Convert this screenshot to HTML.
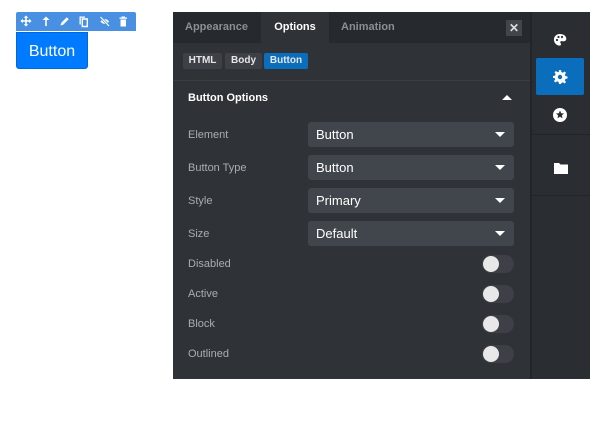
<!DOCTYPE html>
<html><head><style>
*{box-sizing:border-box;margin:0;padding:0}
body{width:608px;height:425px;background:#fff;font-family:"Liberation Sans",sans-serif;position:relative;overflow:hidden}
.a{position:absolute}
.tb{left:16px;top:12px;width:120px;height:19px;background:#4a90e2;border-radius:2px 2px 0 0}
.btn{left:16px;top:32px;width:72px;height:37px;background:#007bff;border-radius:0 0 3px 3px;color:#fff;font-size:16px;line-height:37px;text-align:center;border:1px solid #0069d9}
.panel{left:173px;top:12px;width:357px;height:367px;background:#2f3337}
.tabs{left:0;top:0;width:357px;height:31px;background:#26292d}
.tab{top:0;height:31px;line-height:31px;font-size:11px;font-weight:bold;color:#8a8f95}
.crumb{top:41px;height:16px;line-height:16px;font-size:10px;font-weight:bold;color:#e6e6e6;background:#3d4147;border-radius:2px;text-align:center}
.lbl{left:15px;font-size:11px;color:#a9adb2}
.sel{left:135px;width:206px;height:25px;background:#41454c;border-radius:3px;color:#fff;font-size:13px;line-height:25px;padding-left:8px}
.sel:after{content:"";position:absolute;right:9px;top:10px;border-left:5px solid transparent;border-right:5px solid transparent;border-top:5px solid #fff}
.tg{left:309px;width:32px;height:18px;border-radius:9px;background:#3d4147}
.tg:before{content:"";position:absolute;left:1px;top:1px;width:16px;height:16px;border-radius:50%;background:#e8e8e8}
.side{left:530px;top:12px;width:60px;height:367px;background:#2a2e32;border-left:2px solid #212428}
</style></head><body>
<div class="a tb">
<svg width="120" height="19" viewBox="0 0 120 19" fill="#fff">
<path d="M10 3.5l2.3 2.3h-1.5v2.4h2.4V6.7l2.3 2.3-2.3 2.3V9.8h-2.4v2.4h1.5L10 14.5l-2.3-2.3h1.5V9.8H6.8v1.5L4.5 9l2.3-2.3v1.5h2.4V5.8H7.7z"/>
<path d="M30 4.5l3.5 3.5h-2.7v6h-1.6V8h-2.7z"/>
<path d="M44.5 13.5l.8-2.7 5.5-5.5 1.9 1.9-5.5 5.5z"/>
<path d="M63.5 4.5h5.5v1.3h-4.2V12.5h-1.3z"/><path d="M66.3 7h5v7.5h-5z" fill="none" stroke="#fff" stroke-width="1.4"/>
<path d="M84.5 9.5c2-3.2 6.5-3.2 8.5 0-2 3.2-6.5 3.2-8.5 0z"/><path d="M84.5 5l8.5 9" stroke="#4a90e2" stroke-width="2.5"/><path d="M84.5 5l8.5 9" stroke="#fff" stroke-width="1.2"/>
<path d="M105.5 4.5h3.5v1h2v1.3h-7.5V5.5h2zM104.5 7.5h5.5v7h-5.5z"/>
</svg></div>
<div class="a btn">Button</div>
<div class="a panel">
<div class="a tabs"></div>
<div class="a tab" style="left:12px">Appearance</div>
<div class="a tab" style="left:88px;width:68px;background:#2f3337;color:#fff;text-align:center">Options</div>
<div class="a tab" style="left:168px">Animation</div>
<div class="a" style="left:333px;top:8px;width:16px;height:16px;background:#41454c;color:#ddd;font-size:12px;font-weight:bold;text-align:center;line-height:16px">✕</div>
<div class="a crumb" style="left:10px;width:39px">HTML</div>
<div class="a crumb" style="left:52px;width:37px">Body</div>
<div class="a crumb" style="left:91px;width:44px;background:#0b6ebd">Button</div>
<div class="a" style="left:0;top:68px;width:357px;height:1px;background:#3b3f44"></div>
<div class="a" style="left:15px;top:80px;font-size:11px;font-weight:bold;color:#fff">Button Options</div>
<div class="a" style="left:329px;top:83px;border-left:5px solid transparent;border-right:5px solid transparent;border-bottom:5px solid #fff"></div>
<div class="a lbl" style="top:117px">Element</div><div class="a sel" style="top:110px">Button</div>
<div class="a lbl" style="top:150px">Button Type</div><div class="a sel" style="top:143px">Button</div>
<div class="a lbl" style="top:183px">Style</div><div class="a sel" style="top:176px">Primary</div>
<div class="a lbl" style="top:216px">Size</div><div class="a sel" style="top:209px">Default</div>
<div class="a lbl" style="top:246px">Disabled</div><div class="a tg" style="top:243px"></div>
<div class="a lbl" style="top:276px">Active</div><div class="a tg" style="top:273px"></div>
<div class="a lbl" style="top:306px">Block</div><div class="a tg" style="top:303px"></div>
<div class="a lbl" style="top:336px">Outlined</div><div class="a tg" style="top:333px"></div>
</div>
<div class="a side">
<svg class="a" style="left:20px;top:20px" width="16" height="16" viewBox="0 0 16 16"><path fill="#fff" d="M8 2C4 2 1.5 5 2 8.5 2.5 12 6 14 8 13.5c1.5-.3 1-2 .5-2.5-.7-.8 0-2 1.3-1.8 2 .3 4.5 0 4.5-2.5C14.3 4 11.5 2 8 2z"/><circle cx="5" cy="8" r="1.1" fill="#2a2e32"/><circle cx="6.5" cy="5" r="1.1" fill="#2a2e32"/><circle cx="10" cy="5" r="1.1" fill="#2a2e32"/></svg>
<div class="a" style="left:4px;top:46px;width:48px;height:37px;background:#0b6ebd;border-radius:2px"></div>
<svg class="a" style="left:20px;top:57px" width="16" height="16" viewBox="0 0 16 16"><path fill="#fff" d="M7 1h2l.4 2 1.5.7 1.7-1.2 1.4 1.4-1.2 1.7.7 1.5 2 .4v2l-2 .4-.7 1.5 1.2 1.7-1.4 1.4-1.7-1.2-1.5.7L9 15H7l-.4-2-1.5-.7-1.7 1.2-1.4-1.4 1.2-1.7-.7-1.5L1 9V7l2-.4.7-1.5-1.2-1.7 1.4-1.4 1.7 1.2 1.5-.7z"/><circle cx="8" cy="8" r="2.2" fill="#0b6ebd"/></svg>
<svg class="a" style="left:20px;top:95px" width="16" height="16" viewBox="0 0 16 16"><circle cx="8" cy="8" r="7" fill="#fff"/><path fill="#2a2e32" d="M8 3.5l1.2 2.7 2.8.3-2.1 1.9.6 2.8L8 9.8l-2.5 1.4.6-2.8L4 6.5l2.8-.3z"/></svg>
<div class="a" style="left:0;top:122px;width:58px;height:1px;background:#212428"></div>
<div class="a" style="left:0;top:183px;width:58px;height:1px;background:#212428"></div>
<svg class="a" style="left:21px;top:149px" width="16" height="14" viewBox="0 0 16 14"><path fill="#fff" d="M1 2h5l1.5 1.5H15V13H1z"/></svg>
</div>
</body></html>
